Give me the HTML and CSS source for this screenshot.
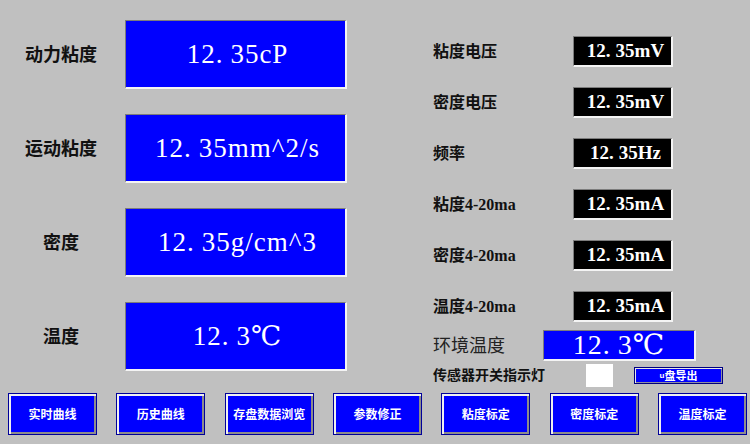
FILE: index.html
```html
<!DOCTYPE html>
<html lang="zh-CN">
<head>
<meta charset="utf-8">
<title>粘度监测</title>
<link rel="stylesheet" href="styles.css">
</head>
<body>
<div class="screen">
  <div class="main">
    <div class="left">
      <div class="lrow"><span class="llabel">动力粘度</span><div class="bigval">12<span class="dot">.</span>35cP</div></div>
      <div class="lrow"><span class="llabel">运动粘度</span><div class="bigval">12<span class="dot">.</span>35mm^2/s</div></div>
      <div class="lrow"><span class="llabel">密度</span><div class="bigval">12<span class="dot">.</span>35g/cm^3</div></div>
      <div class="lrow"><span class="llabel">温度</span><div class="bigval">12<span class="dot">.</span>3℃</div></div>
    </div>
    <div class="right">
      <div class="rlist">
        <div class="rrow"><span class="rlabel">粘度电压</span><div class="blk">12<span class="dot">.</span>35mV</div></div>
        <div class="rrow"><span class="rlabel">密度电压</span><div class="blk">12<span class="dot">.</span>35mV</div></div>
        <div class="rrow"><span class="rlabel">频率</span><div class="blk">12<span class="dot">.</span>35Hz</div></div>
        <div class="rrow"><span class="rlabel">粘度4-20ma</span><div class="blk">12<span class="dot">.</span>35mA</div></div>
        <div class="rrow"><span class="rlabel">密度4-20ma</span><div class="blk">12<span class="dot">.</span>35mA</div></div>
        <div class="rrow"><span class="rlabel">温度4-20ma</span><div class="blk">12<span class="dot">.</span>35mA</div></div>
      </div>
      <div class="envrow"><span class="envlabel">环境温度</span><div class="envval">12<span class="dot">.</span>3℃</div></div>
      <div class="sensrow"><span class="senslabel">传感器开关指示灯</span><div class="lamp"></div><div class="ubtn"><span class="u">u</span>盘导出</div></div>
    </div>
  </div>
  <div class="bar">
    <div class="btn">实时曲线</div>
    <div class="btn">历史曲线</div>
    <div class="btn">存盘数据浏览</div>
    <div class="btn">参数修正</div>
    <div class="btn">粘度标定</div>
    <div class="btn">密度标定</div>
    <div class="btn">温度标定</div>
  </div>
</div>
</body>
</html>
```

FILE: styles.css
```css
html, body {
  margin: 0;
  padding: 0;
  background: #c0c0c0;
}
body {
  font-family: "Liberation Serif", "Noto Sans CJK SC", serif;
  color: #000;
}
.screen {
  width: 750px;
  height: 444px;
  overflow: hidden;
}
.main {
  display: flex;
  height: 393px;
  box-sizing: border-box;
  padding-top: 20px;
}
.left {
  width: 347px;
  display: flex;
  flex-direction: column;
  gap: 25px;
}
.lrow {
  display: flex;
  align-items: center;
  height: 69px;
}
.llabel {
  width: 122px;
  text-align: center;
  font-size: 18px;
  font-weight: bold;
  line-height: 1;
  color: #111;
}
.bigval {
  margin-left: 3px;
  width: 222px;
  height: 69px;
  box-sizing: border-box;
  background: #0000ff;
  border-style: solid;
  border-width: 1px 2px 2px 1px;
  border-color: #7c7c7c #f4f4f4 #f4f4f4 #7c7c7c;
  color: #fff;
  font-family: "Liberation Serif", "DejaVu Serif", serif;
  font-size: 27px;
  letter-spacing: 1px;
  padding-left: 4px;
  display: flex;
  align-items: center;
  justify-content: center;
}
.dot {
  margin-right: 7px;
}
.right {
  margin-left: 86px;
  padding-top: 16px;
  display: flex;
  flex-direction: column;
}
.rlist {
  display: flex;
  flex-direction: column;
  gap: 20px;
}
.rrow {
  display: flex;
  align-items: center;
  height: 31px;
}
.rlabel {
  width: 140px;
  font-size: 16px;
  font-weight: bold;
  color: #111;
  line-height: 1;
}
.blk {
  width: 100px;
  height: 31px;
  box-sizing: border-box;
  background: #000;
  border-style: solid;
  border-width: 1px 2px 2px 1px;
  border-color: #7c7c7c #f4f4f4 #f4f4f4 #7c7c7c;
  color: #fff;
  font-family: "Liberation Serif", serif;
  font-weight: bold;
  font-size: 19px;
  display: flex;
  align-items: center;
  justify-content: center;
  padding-left: 6px;
}
.blk .dot {
  margin-right: 5px;
}
.envrow {
  margin-top: 8px;
  display: flex;
  align-items: center;
  height: 31px;
}
.envlabel {
  width: 110px;
  font-size: 18px;
  color: #222;
  line-height: 1;
}
.envval {
  width: 153px;
  height: 31px;
  box-sizing: border-box;
  background: #0000ff;
  border-style: solid;
  border-width: 1px 2px 2px 1px;
  border-color: #7c7c7c #f4f4f4 #f4f4f4 #7c7c7c;
  color: #fff;
  font-family: "Liberation Serif", "DejaVu Serif", serif;
  font-size: 28px;
  letter-spacing: 1px;
  display: flex;
  align-items: center;
  justify-content: center;
  line-height: 1;
}
.sensrow {
  margin-top: 3px;
  display: flex;
  align-items: center;
  height: 23px;
}
.senslabel {
  width: 153px;
  font-size: 14px;
  font-weight: bold;
  color: #111;
  line-height: 1;
}
.lamp {
  width: 27px;
  height: 23px;
  background: #fff;
}
.ubtn {
  margin-left: 21px;
  width: 89px;
  height: 17px;
  box-sizing: border-box;
  background: #0000ff;
  border: 1px solid #000080;
  box-shadow: inset 1px 1px 0 #e8e8e8, inset -1px -1px 0 #9090a0;
  color: #fff;
  font-family: "Noto Sans CJK SC", sans-serif;
  font-size: 11px;
  font-weight: bold;
  display: flex;
  align-items: center;
  justify-content: center;
  line-height: 1;
}
.ubtn .u {
  font-size: 8px;
  font-family: "Liberation Sans", sans-serif;
}
.bar {
  display: flex;
  justify-content: space-between;
  padding: 0 3px 0 8px;
}
.btn {
  width: 89px;
  height: 42px;
  box-sizing: border-box;
  background: #0000ff;
  border: 1px solid #00009a;
  box-shadow: inset 2px 2px 0 #f0f0f0, inset -2px -2px 0 #8c8c8c;
  color: #fff;
  font-family: "Noto Sans CJK SC", sans-serif;
  font-size: 12px;
  font-weight: bold;
  display: flex;
  align-items: center;
  justify-content: center;
  line-height: 1;
}
```
